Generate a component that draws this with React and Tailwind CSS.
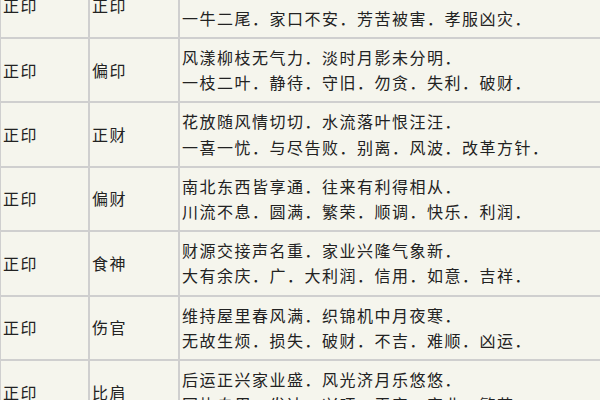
const rows = [
  ["正印", "正印", "\u00a0", "一牛二尾．家口不安．芳苦被害．孝服凶灾．"],
  ["正印", "偏印", "风漾柳枝无气力．淡时月影未分明．", "一枝二叶．静待．守旧．勿贪．失利．破财．"],
  ["正印", "正财", "花放随风情切切．水流落叶恨汪汪．", "一喜一忧．与尽告败．别离．风波．改革方针．"],
  ["正印", "偏财", "南北东西皆享通．往来有利得相从．", "川流不息．圆满．繁荣．顺调．快乐．利润．"],
  ["正印", "食神", "财源交接声名重．家业兴隆气象新．", "大有余庆．广．大利润．信用．如意．吉祥．"],
  ["正印", "伤官", "维持屋里春风满．织锦机中月夜寒．", "无故生烦．损失．破财．不吉．难顺．凶运．"],
  ["正印", "比肩", "后运正兴家业盛．风光济月乐悠悠．", "固执自用．发达．兴旺．平安．家业．繁荣．"],
];

const cell = "border border-[#cfcfcf] px-[2px] py-[6px] align-middle";

export default function App() {
  return (
    <div className="w-[600px] h-[400px] overflow-hidden bg-[#f5f5ed]">
      <table
        className="mt-[-26.4px] w-[720px] border-separate border-spacing-0 text-[16px] leading-[25.2px] tracking-[1.5px] text-[#222]"
        style={{ fontFamily: '"Noto Sans CJK SC", "Noto Sans", sans-serif' }}
      >
        <tbody>
          {rows.map((r, i) => (
            <tr key={i}>
              <td className={`${cell} w-[89px]`}>{r[0]}</td>
              <td className={`${cell} w-[90px]`}>{r[1]}</td>
              <td className={cell}>
                <div>{r[2]}</div>
                <div>{r[3]}</div>
              </td>
            </tr>
          ))}
        </tbody>
      </table>
    </div>
  );
}
